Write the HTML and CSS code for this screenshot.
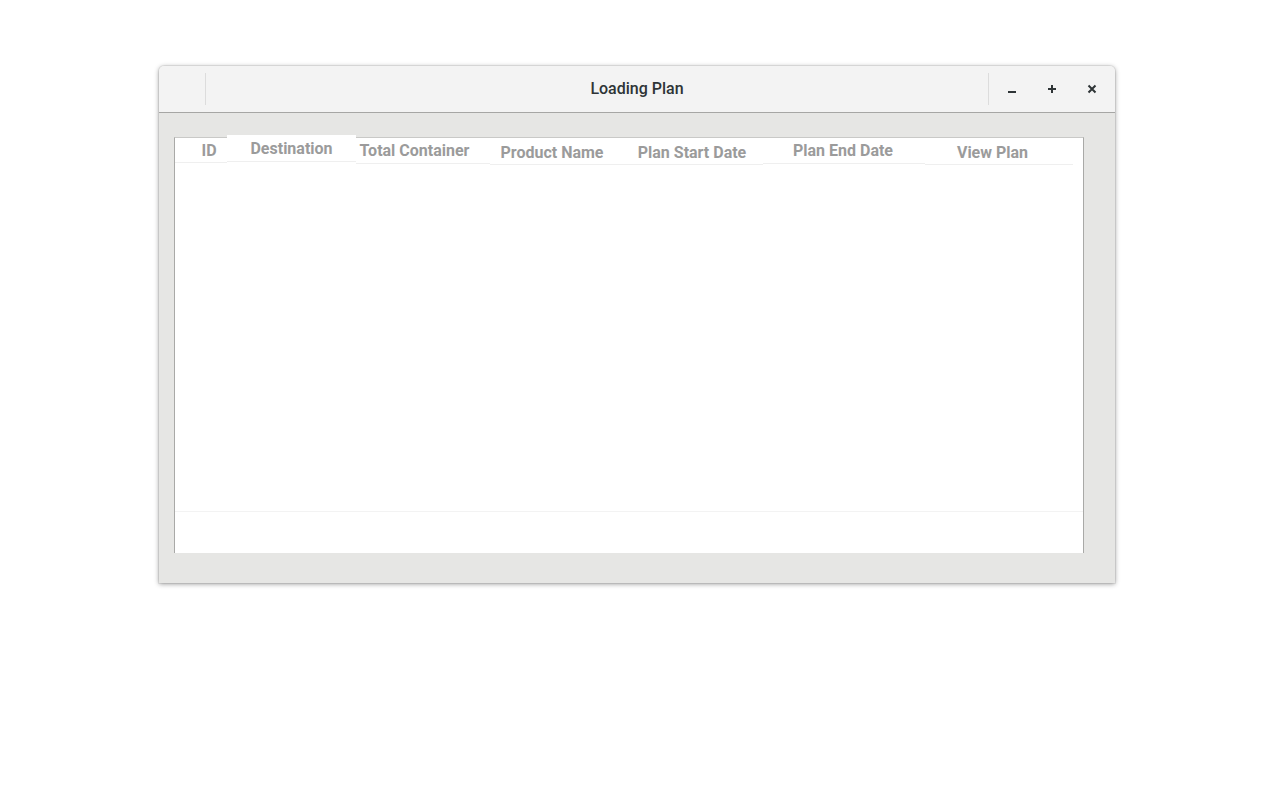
FILE: index.html
```html
<!DOCTYPE html>
<html lang="en">
<head>
<meta charset="utf-8">
<title>Loading Plan</title>
<link rel="stylesheet" href="styles.css">
</head>
<body>
<div class="window">
  <div class="titlebar">
    <div class="tb-start"><div class="tb-left"></div></div>
    <div class="tb-title">Loading Plan</div>
    <div class="tb-end">
      <div class="tb-controls">
        <button class="tb-btn" aria-label="Minimize">
          <svg width="12" height="12" viewBox="0 0 12 12"><rect x="2" y="8" width="8" height="2" fill="#2e3436"/></svg>
        </button>
        <button class="tb-btn" aria-label="Maximize">
          <svg width="12" height="12" viewBox="0 0 12 12"><rect x="2" y="5" width="8" height="2" fill="#2e3436"/><rect x="5" y="2" width="2" height="8" fill="#2e3436"/></svg>
        </button>
        <button class="tb-btn" aria-label="Close">
          <svg width="12" height="12" viewBox="0 0 12 12"><path d="M2.5 2.5 L9.5 9.5 M9.5 2.5 L2.5 9.5" stroke="#2e3436" stroke-width="2"/></svg>
        </button>
      </div>
    </div>
  </div>
  <div class="content">
    <div class="table">
      <div class="thead">
        <div class="th c-id">ID</div>
        <div class="th c-dest">Destination</div>
        <div class="th c-total">Total Container</div>
        <div class="th c-prod">Product Name</div>
        <div class="th c-start">Plan Start Date</div>
        <div class="th c-end">Plan End Date</div>
        <div class="th c-view">View Plan</div>
      </div>
      <div class="tbody"></div>
      <div class="tfoot"></div>
    </div>
  </div>
</div>
</body>
</html>
```
FILE: styles.css
```css
html, body {
  margin: 0;
  padding: 0;
  background: #ffffff;
  font-family: Roboto, "Open Sans", "DejaVu Sans", sans-serif;
}
body {
  width: 1280px;
  height: 800px;
  padding-top: 66px;
  padding-left: 159px;
  box-sizing: border-box;
}
.window {
  width: 956px;
  height: 517px;
  display: flex;
  flex-direction: column;
  border-radius: 5px 5px 0 0;
  box-shadow: 0 1px 5px rgba(0,0,0,0.4), 0 0 0 1px rgba(0,0,0,0.06);
  background: #e6e6e4;
  overflow: hidden;
}
.titlebar {
  height: 47px;
  flex: 0 0 47px;
  box-sizing: border-box;
  background: #f3f3f3;
  border-bottom: 1px solid #a6a6a4;
  display: grid;
  grid-template-columns: 1fr auto 1fr;
  align-items: center;
}
.tb-start, .tb-end {
  display: flex;
  align-items: center;
}
.tb-end { justify-content: flex-end; }
.tb-left {
  width: 46px;
  height: 32px;
  border-right: 1px solid #dcdcdc;
}
.tb-title {
  text-align: center;
  font-size: 16px;
  font-weight: 500;
  color: #2e3436;
  padding-bottom: 2px;
}
.tb-controls {
  display: flex;
  align-items: center;
  height: 32px;
  border-left: 1px solid #dcdcdc;
  padding-left: 3px;
  padding-right: 3px;
}
.tb-btn {
  width: 40px;
  height: 32px;
  padding: 0;
  margin: 0;
  border: 0;
  background: transparent;
  display: flex;
  align-items: center;
  justify-content: center;
}
.tb-btn svg { display: block; }
.content {
  flex: 1;
  padding: 24px 31px 30px 15px;
  display: flex;
}
.table {
  flex: 1;
  background: #ffffff;
  border-left: 1px solid #a9a9a7;
  border-right: 1px solid #a9a9a7;
  border-top: 1px solid #c9c9c7;
  display: flex;
  flex-direction: column;
}
.thead {
  display: flex;
  height: 28px;
  flex: 0 0 28px;
}
.th {
  font-size: 16px;
  font-weight: 700;
  color: #9b9b9b;
  white-space: nowrap;
  display: flex;
  justify-content: center;
  align-items: center;
  height: 25px;
  margin-top: 0;
  border-bottom: 1px solid #efefef;
  box-sizing: border-box;
  background: #ffffff;
}
.c-id { width: 52px; padding-left: 16px; height: 24px; margin-top: 1px; }
.c-dest { width: 129px; margin-top: -3px; height: 27px; padding-top: 1px; }
.c-total { width: 134px; padding-right: 17px; height: 26px; }
.c-prod { width: 130px; padding-right: 6px; margin-top: 2px; height: 25px; }
.c-start { width: 143px; padding-left: 1px; margin-top: 2px; height: 25px; padding-top: 1px; }
.c-end { width: 162px; padding-right: 2px; height: 26px; }
.c-view { width: 148px; padding-right: 13px; margin-top: 2px; height: 25px; padding-top: 1px; }
.tbody {
  flex: 1;
  border-bottom: 1px solid #f3f3f3;
}
.tfoot {
  height: 41px;
  flex: 0 0 41px;
}
```
